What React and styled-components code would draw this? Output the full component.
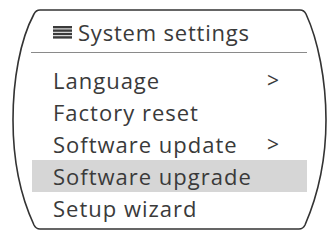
import React from 'react'
import styled, { createGlobalStyle } from 'styled-components'

const GlobalStyle = createGlobalStyle`
  html, body {
    margin: 0;
    padding: 0;
    background: #ffffff;
  }
  body {
    font-family: 'Open Sans', 'DejaVu Sans', sans-serif;
    color: #3a3a3a;
  }
`

const Screen = styled.div`
  position: relative;
  width: 331px;
  height: 232px;
  overflow: hidden;
  background: #fff;
`

const Outline = styled.svg`
  position: absolute;
  left: 0;
  top: 0;
  width: 331px;
  height: 232px;
  pointer-events: none;
`

const Content = styled.div`
  position: relative;
  display: flex;
  flex-direction: column;
  padding-top: 16px;
`

const Header = styled.div`
  display: flex;
  align-items: center;
  gap: 6px;
  height: 32px;
  padding-left: 53px;
`

const Title = styled.span`
  font-size: 22px;
  letter-spacing: 0.8px;
  line-height: 32px;
`

const Divider = styled.div`
  height: 0;
  margin: 4px 24px 0 31px;
  border-top: 1.5px solid #8a8a8a;
`

const List = styled.div`
  display: flex;
  flex-direction: column;
  margin-top: 11px;
`

const Row = styled.div`
  display: flex;
  align-items: center;
  height: 32px;
  margin: 0 24px 0 32px;
  padding-left: 21px;
  background: ${(p) => (p.$selected ? '#d6d6d6' : 'transparent')};
  font-size: 22px;
  line-height: 32px;
`

const Label = styled.span`
  flex: 0 0 214px;
  letter-spacing: 1px;
  white-space: nowrap;
`

const Chevron = styled.span`
  font-size: 21px;
`

const MenuIcon = () => (
  <svg width='19' height='13' viewBox='0 0 19 13'>
    {[0, 3.4, 6.8, 10.2].map((y) => (
      <rect key={y} x='0' y={y} width='19' height='2.4' fill='#3a3a3a' />
    ))}
  </svg>
)

const items = [
  { label: 'Language', more: true },
  { label: 'Factory reset' },
  { label: 'Software update', more: true },
  { label: 'Software upgrade', selected: true },
  { label: 'Setup wizard' },
]

const App = () => {
  return (
    <>
      <GlobalStyle />
      <Screen>
        <Outline viewBox='0 0 331 232'>
          <path
            d='M40 10 L300 10 Q304 10 306 14 C318 40 326 80 326 120 C326 160 318 195 305 225 Q303 229 299 229 L40 229 Q36 229 34 225 C20 195 13 160 13 120 C13 80 20 40 34 14 Q36 10 40 10 Z'
            fill='none'
            stroke='#333'
            strokeWidth='1.6'
          />
        </Outline>
        <Content>
          <Header>
            <MenuIcon />
            <Title>System settings</Title>
          </Header>
          <Divider />
          <List>
            {items.map((item) => (
              <Row key={item.label} $selected={item.selected}>
                <Label>{item.label}</Label>
                {item.more && <Chevron>&gt;</Chevron>}
              </Row>
            ))}
          </List>
        </Content>
      </Screen>
    </>
  )
}

export default App
